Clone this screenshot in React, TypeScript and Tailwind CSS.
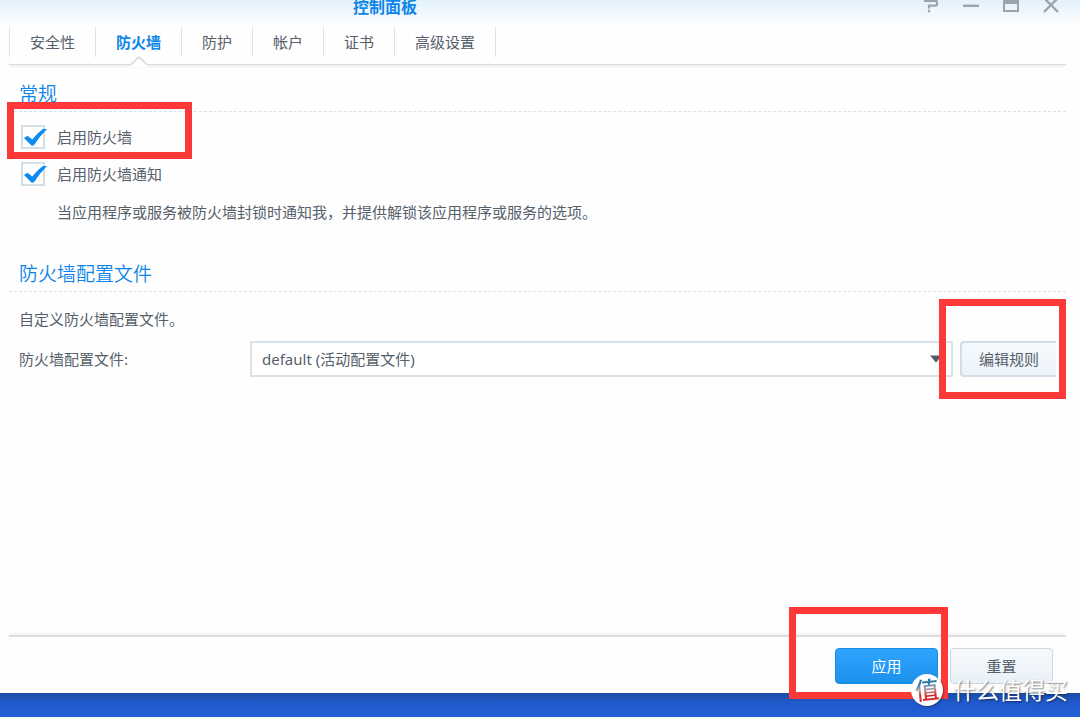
import { useState } from "react";
import type { ReactNode } from "react";

const tabs = ["安全性", "防火墙", "防护", "帐户", "证书", "高级设置"];

function WindowControls() {
  const button = "flex h-4 w-10 items-start justify-center text-[#9aa4ae]";
  return (
    <div className="flex">
      <button type="button" aria-label="帮助" className={button}>
        <svg width="16" height="13" viewBox="0 0 16 13" fill="none" stroke="currentColor" strokeWidth="2.2">
          <path d="M1 0.8H12.5Q14 0.8 14 2.5V4Q14 5.6 12.5 5.6H6V8.6M6 9.8V12.2" />
        </svg>
      </button>
      <button type="button" aria-label="最小化" className={button}>
        <svg width="16" height="13" viewBox="0 0 16 13" fill="none" stroke="currentColor" strokeWidth="2.4">
          <path d="M0 5.8H16" />
        </svg>
      </button>
      <button type="button" aria-label="最大化" className={button}>
        <svg width="16" height="13" viewBox="0 0 16 13" fill="none" stroke="currentColor" strokeWidth="2">
          <path d="M1 0V11H15V0" />
          <path d="M0 2H16" strokeWidth="4" />
        </svg>
      </button>
      <button type="button" aria-label="关闭" className={button}>
        <svg width="16" height="13" viewBox="0 0 16 13" fill="none" stroke="currentColor" strokeWidth="2.4">
          <path d="M1 -2L15 12M15 -2L1 12" />
        </svg>
      </button>
    </div>
  );
}

function CheckRow({ id, children }: { id: string; children: ReactNode }) {
  const [checked, setChecked] = useState(true);
  return (
    <div className="flex h-[37px] items-center gap-3 pl-3">
      <span className="relative h-6 w-6">
        <input
          id={id}
          type="checkbox"
          checked={checked}
          onChange={(e) => setChecked(e.target.checked)}
          className="block h-6 w-6 appearance-none border-2 border-[#d5dde5] bg-white"
        />
        {checked && (
          <svg className="pointer-events-none absolute left-0 top-0 overflow-visible" width="26" height="24" viewBox="0 0 26 24">
            <path d="M3 13L6.5 10.8L11.3 14.4Q17 7.5 22 4H26Q18 12 12.8 20.6H10.4Z" fill="#0d8bf0" />
          </svg>
        )}
      </span>
      <label htmlFor={id}>{children}</label>
    </div>
  );
}

function SectionTitle({ children }: { children: ReactNode }) {
  return (
    <h2 className="flex h-10 items-center border-b border-dashed border-[#d9e2ec] pt-1 pl-2.5 text-[19px] font-[350] text-[#0d84ea]">
      {children}
    </h2>
  );
}

export default function App() {
  const [active, setActive] = useState("防火墙");
  return (
    <div className="relative flex min-h-screen flex-col overflow-hidden bg-[#fefefe] font-['Noto_Sans','Noto_Sans_CJK_SC',sans-serif] text-[15px] leading-5 text-[#56606a]">
      <header className="flex h-[26px] items-start justify-between bg-linear-to-b from-[#e2f1fc] to-[#fefefe] pl-[353px] pr-[9px]">
        <h1 className="text-base leading-3.5 font-bold text-[#0d86ea]">控制面板</h1>
        <WindowControls />
      </header>

      <nav className="mr-3.5 ml-[9px] flex h-[39px] border-b border-[#dcdcdc] pt-px shadow-[0_3px_2px_-1px_#eeeeee]">
        {tabs.map((tab) => (
          <button
            key={tab}
            type="button"
            onClick={() => setActive(tab)}
            className={
              "relative h-[30px] border-r border-[#dbe4ed] px-5 pb-px first:border-l " +
              (tab === active ? "font-bold text-[#0d86ea]" : "")
            }
          >
            {tab}
            {tab === active && (
              <svg className="absolute top-[29px] left-1/2 -translate-x-1/2" width="16" height="11" viewBox="0 0 16 11">
                <path d="M0 8.5L8 1L16 8.5V11H0Z" fill="#fefefe" />
                <path d="M0 8.5L8 1L16 8.5" fill="none" stroke="#d6d6d6" strokeWidth="1.3" />
              </svg>
            )}
          </button>
        ))}
      </nav>

      <main className="mr-3.5 ml-[9px] flex-1">
        <section className="pt-[7px]">
          <SectionTitle>常规</SectionTitle>
          <div className="pt-1.5">
            <CheckRow id="firewall">启用防火墙</CheckRow>
            <CheckRow id="notify">启用防火墙通知</CheckRow>
            <p className="pt-2.5 pl-12">当应用程序或服务被防火墙封锁时通知我，并提供解锁该应用程序或服务的选项。</p>
          </div>
        </section>

        <section className="pt-[30px]">
          <SectionTitle>防火墙配置文件</SectionTitle>
          <p className="mt-[17px] pl-2.5">自定义防火墙配置文件。</p>
          <div className="mt-3 flex items-center overflow-hidden pr-2.5 pl-2.5">
            <label htmlFor="profile" className="w-[231px] shrink-0">
              防火墙配置文件:
            </label>
            <div className="relative flex-1">
              <select
                id="profile"
                className="block h-9 w-full appearance-none rounded-none border-2 border-[#d9e1e9] bg-white px-2.5 text-[15px]"
              >
                <option>default (活动配置文件)</option>
              </select>
              <svg className="pointer-events-none absolute top-[14px] right-[11px]" width="12" height="8" viewBox="0 0 12 8">
                <path d="M0 0.5H12L6 7.5Z" fill="#505a64" />
              </svg>
            </div>
            <button
              type="button"
              className="ml-[7px] h-9 w-24 shrink-0 rounded-l border-2 border-r-0 border-[#d3dde7] bg-linear-to-b from-[#f5fafe] to-[#edf3f9]"
            >
              编辑规则
            </button>
          </div>
        </section>
      </main>

      <footer className="mr-3.5 ml-[9px] flex h-[58px] justify-end gap-3 border-t-2 border-[#dedede] pt-[11px] pr-[13px] shadow-[0_-3px_3px_-1px_#f1f1f1]">
        <button
          type="button"
          className="h-9 w-[103px] rounded border border-[#168ce0] bg-linear-to-b from-[#2fa5ff] to-[#1a91ec] text-white"
        >
          应用
        </button>
        <button
          type="button"
          className="h-9 w-[103px] rounded border border-[#cbd6e1] bg-linear-to-b from-[#f6fafd] to-[#e9f0f6]"
        >
          重置
        </button>
      </footer>
      <div className="h-6 bg-linear-to-b from-[#1b4ca3] via-[#2059cb] via-40% to-[#225fd6]" />

      <div className="pointer-events-none absolute top-[102px] left-[7px] h-[57px] w-[185px] border-7 border-[#fd3838]" />
      <div className="pointer-events-none absolute top-[299px] right-3.5 h-[100px] w-[127px] border-7 border-[#fd3838]" />
      <div className="pointer-events-none absolute right-[132px] bottom-[18px] h-[92px] w-[159px] border-7 border-[#fd3838]" />

      <div className="pointer-events-none absolute right-3 bottom-[11px] flex h-8 items-center gap-2.5">
        <span className="flex h-8 w-8 items-center justify-center rounded-full bg-white shadow-[1px_1px_2px_#00000066]">
          <span className="-rotate-6 bg-linear-to-b from-[#2878a8] from-30% via-[#a0a6ad] via-45% to-[#d52c32] to-65% bg-clip-text text-2xl font-medium text-transparent">
            值
          </span>
        </span>
        <span className="text-[23px] text-white [text-shadow:1px_1px_2px_#00000080]">什么值得买</span>
      </div>
    </div>
  );
}
